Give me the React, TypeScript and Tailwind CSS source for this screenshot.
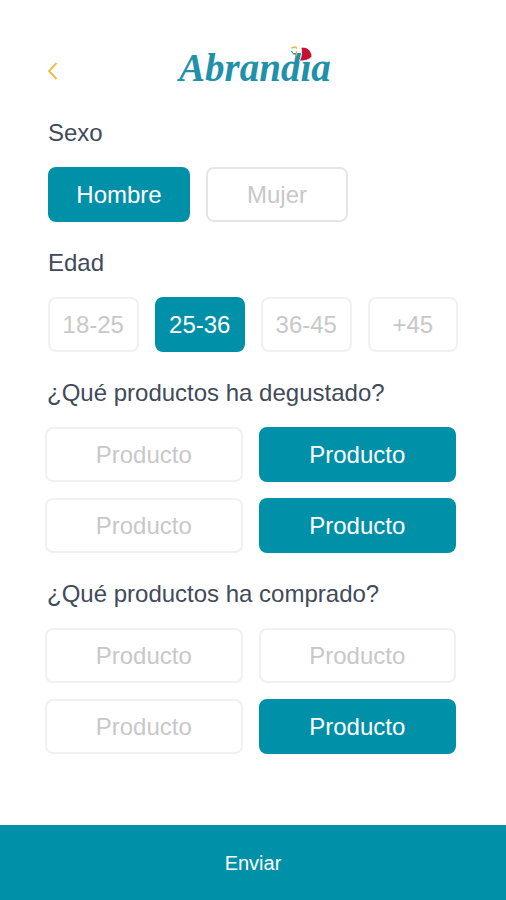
import { useState } from 'react'

const AGES = ['18-25', '25-36', '36-45', '+45']
const SEXES = ['Hombre', 'Mujer']
const PRODUCTS = [0, 1, 2, 3]

type ChoiceProps = {
  label: string
  selected: boolean
  onClick: () => void
  border?: string
}

const Choice = ({ label, selected, onClick, border = 'border-[#f0f0f0]' }: ChoiceProps) => (
  <button
    type="button"
    aria-pressed={selected}
    onClick={onClick}
    className={`h-[55px] w-full rounded-lg border-2 text-2xl ${
      selected ? 'border-[#0090a8] bg-[#0090a8] text-white' : `${border} bg-white text-[#c8c8c8]`
    }`}
  >
    {label}
  </button>
)

const Title = ({ id, children }: { id: string; children: string }) => (
  <h2 id={id} className="mb-[18px] text-2xl leading-8 text-[#3f4a5a]">
    {children}
  </h2>
)

const Logo = () => (
  <svg viewBox="0 0 156 46" className="h-[46px] w-[156px]" role="img" aria-label="Abrandia">
    <text
      x="4"
      y="38"
      fill="#2091a8"
      fontFamily="'Liberation Serif', serif"
      fontSize="39"
      fontWeight="700"
      fontStyle="italic"
    >
      Abrandia
    </text>
    {/* fan over the i */}
    <path
      d="M126 4.500c5.500-1.500 10.500 2.500 11 9-2.500 3.200-7.500 4.800-12.500 4.500 2-4 2.800-9 1.500-13.500z"
      fill="#c4122f"
      stroke="#fff"
      strokeWidth="0.8"
    />
    <g fill="none" stroke="#e9b44c" strokeWidth="1.500" strokeLinecap="round">
      <path d="M117 5c1.500-1.200 3.500-1.200 4.500 0" />
      <path d="M121.500 8.500c.3 1.500 0 3-.8 4" />
      <path d="M116.500 8.500l1 .8" stroke="#4aa5b5" />
    </g>
  </svg>
)

type ProductGroupProps = {
  id: string
  title: string
  initial: number[]
}

const ProductGroup = ({ id, title, initial }: ProductGroupProps) => {
  const [selected, setSelected] = useState(initial)

  const toggle = (product: number) =>
    setSelected((current) =>
      current.includes(product) ? current.filter((item) => item !== product) : [...current, product],
    )

  return (
    <section role="group" aria-labelledby={id} className="pr-[50px] pl-[45px]">
      <div className="pl-0.5">
        <Title id={id}>{title}</Title>
      </div>
      <div className="grid grid-cols-2 gap-4">
        {PRODUCTS.map((product) => (
          <Choice
            key={product}
            label="Producto"
            selected={selected.includes(product)}
            onClick={() => toggle(product)}
          />
        ))}
      </div>
    </section>
  )
}

const App = () => {
  const [sex, setSex] = useState('Hombre')
  const [age, setAge] = useState('25-36')

  return (
    <div className="flex min-h-screen flex-col bg-white font-['Liberation_Sans',Arial,sans-serif]">
      <header className="grid grid-cols-[1fr_auto_1fr] items-end px-10 pt-[43px] pb-7">
        <button type="button" aria-label="Volver" className="flex h-9 w-6 items-center justify-center">
          <svg viewBox="0 0 12 20" className="h-5 w-3" fill="none" stroke="#f3bd4a" strokeWidth="2">
            <path d="M10.500 2L3 10l7.500 8" />
          </svg>
        </button>
        <Logo />
      </header>

      <main className="flex flex-col gap-[25px] pb-10">
        <section role="group" aria-labelledby="sexo" className="px-12">
          <Title id="sexo">Sexo</Title>
          <div className="grid max-w-[300px] grid-cols-2 gap-4">
            {SEXES.map((item) => (
              <Choice
                key={item}
                label={item}
                selected={sex === item}
                onClick={() => setSex(item)}
                border="border-[#e6e6e6]"
              />
            ))}
          </div>
        </section>

        <section role="group" aria-labelledby="edad" className="px-12">
          <Title id="edad">Edad</Title>
          <div className="grid grid-cols-4 gap-4">
            {AGES.map((item) => (
              <Choice key={item} label={item} selected={age === item} onClick={() => setAge(item)} />
            ))}
          </div>
        </section>

        <ProductGroup id="degustado" title="¿Qué productos ha degustado?" initial={[1, 3]} />
        <ProductGroup id="comprado" title="¿Qué productos ha comprado?" initial={[3]} />
      </main>

      <button type="submit" className="mt-auto h-[75px] w-full bg-[#0090a8] text-xl text-white">
        Enviar
      </button>
    </div>
  )
}

export default App
